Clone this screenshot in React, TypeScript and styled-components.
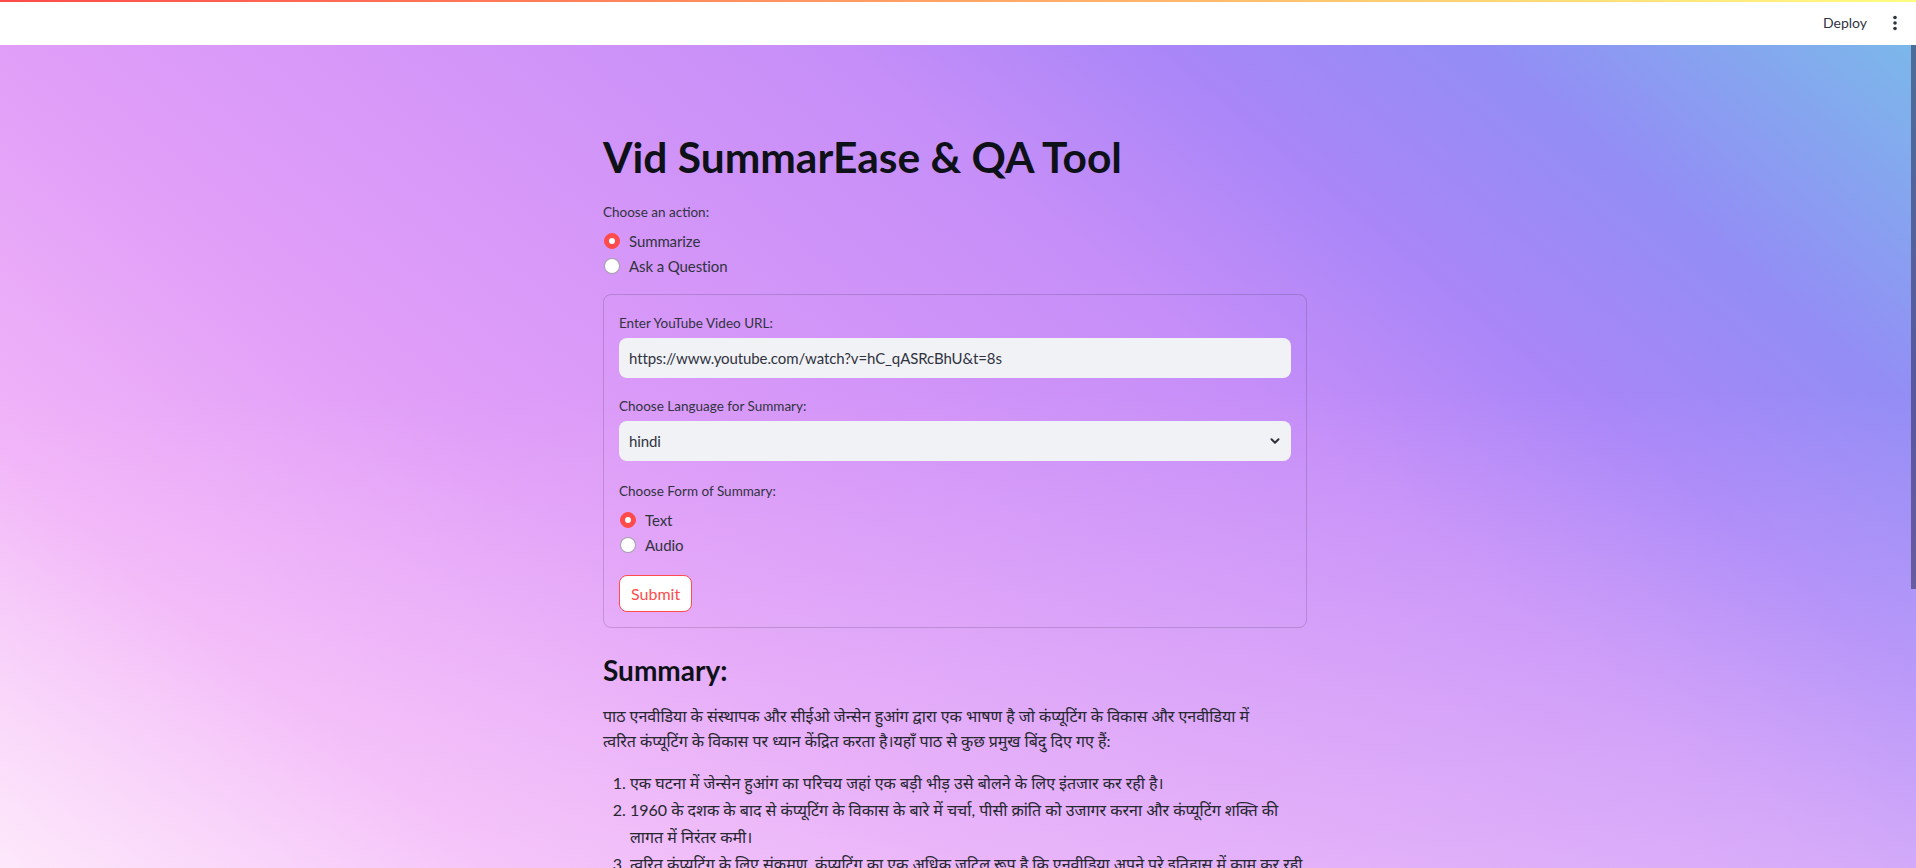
import React from 'react';
import styled, { createGlobalStyle } from 'styled-components';

const GlobalStyle = createGlobalStyle`
  html, body { margin: 0; padding: 0; height: 100%; overflow: hidden; }
  body {
    font-family: Lato, "Noto Sans", "Noto Sans Devanagari", sans-serif;
    color: #31333f;
  }
  * { box-sizing: border-box; }
`;

const Shell = styled.div`
  height: 100vh;
  display: flex;
  flex-direction: column;
  overflow: hidden;
`;

const Header = styled.header`
  position: relative;
  flex: none;
  height: 45px;
  background: #ffffff;
  display: flex;
  align-items: center;
  justify-content: flex-end;
  padding-right: 12px;
  gap: 7px;
  &::before {
    content: '';
    position: absolute;
    top: 0;
    left: 0;
    right: 0;
    height: 2px;
    background: linear-gradient(90deg, #ff4b4b, #fffd80);
  }
`;

const DeployButton = styled.button`
  border: none;
  background: transparent;
  font-family: Lato, "Noto Sans", sans-serif;
  font-size: 14px;
  color: #31333f;
  padding: 4px 12px;
  cursor: pointer;
`;

const MenuButton = styled.button`
  border: none;
  background: transparent;
  width: 18px;
  height: 28px;
  padding: 0;
  display: flex;
  align-items: center;
  justify-content: center;
`;

const Main = styled.main`
  position: relative;
  flex: 1;
  overflow: hidden;
  background:
    linear-gradient(to bottom, rgba(253, 232, 251, 0) 42%, rgba(253, 232, 251, 0.32) 100%),
    linear-gradient(
      40deg,
      #fde8fb 0%,
      #f1b4f8 17%,
      #e09ef8 34%,
      #d295f8 50%,
      #c58ef8 63%,
      #a986f8 74%,
      #938df5 85%,
      #7bb8ea 100%
    );
`;

const ScrollThumb = styled.div`
  position: absolute;
  top: 0;
  right: 0;
  width: 5px;
  height: 544px;
  background: rgba(20, 20, 50, 0.45);
`;

const Block = styled.div`
  width: 704px;
  margin-left: calc(50% - 355px);
  padding-top: 86px;
  display: flex;
  flex-direction: column;
`;

const Title = styled.h1`
  margin: 0;
  font-size: 42.5px;
  line-height: 52px;
  font-weight: 700;
  color: #0e1117;
`;

const Label = styled.div<{ $top?: number }>`
  font-size: 13.5px;
  line-height: 20px;
  color: #31333f;
  margin-top: ${(p) => p.$top ?? 0}px;
`;

const RadioGroup = styled.div`
  display: flex;
  flex-direction: column;
  margin-top: 6px;
`;

const RadioRow = styled.label`
  display: flex;
  align-items: center;
  height: 25px;
  gap: 9px;
  padding-left: 1px;
  font-size: 15px;
  letter-spacing: -0.1px;
  color: #31333f;
`;

const RadioDot = styled.span<{ $checked?: boolean }>`
  width: 16px;
  height: 16px;
  border-radius: 50%;
  flex: none;
  position: relative;
  background: ${(p) => (p.$checked ? '#ff4b4b' : '#ffffff')};
  border: 1px solid ${(p) => (p.$checked ? '#ff4b4b' : 'rgba(49,51,63,0.45)')};
  &::after {
    content: '';
    display: ${(p) => (p.$checked ? 'block' : 'none')};
    position: absolute;
    left: 50%;
    top: 50%;
    width: 6px;
    height: 6px;
    margin: -3px 0 0 -3px;
    border-radius: 50%;
    background: #ffffff;
  }
`;

const Form = styled.div`
  margin-top: 16px;
  border: 1px solid rgba(49, 51, 63, 0.2);
  border-radius: 8px;
  padding: 18px 15px 15px;
  display: flex;
  flex-direction: column;
`;

const Field = styled.div`
  margin-top: 5px;
  height: 40px;
  border-radius: 8px;
  background: #f0f2f6;
  display: flex;
  align-items: center;
  padding: 0 10px;
  font-size: 15px;
  letter-spacing: -0.1px;
  color: #31333f;
  justify-content: space-between;
`;

const SubmitButton = styled.button`
  margin-top: 18px;
  align-self: flex-start;
  height: 37px;
  padding: 0 11px;
  border: 1px solid #ff4b4b;
  border-radius: 8px;
  background: #ffffff;
  color: #ff4b4b;
  font-family: Lato, "Noto Sans", sans-serif;
  font-size: 16px;
`;

const SubHeading = styled.h3`
  margin: 25px 0 0;
  font-size: 28px;
  line-height: 34px;
  font-weight: 700;
  color: #0e1117;
`;

const Paragraph = styled.p`
  margin: 17px 0 0;
  padding-right: 40px;
  font-size: 16px;
  line-height: 24.5px;
  color: #262730;
`;

const List = styled.ol`
  margin: 16px 0 0;
  padding-left: 27px;
  font-size: 16px;
  line-height: 27px;
  color: #262730;
  li { margin: 0; padding-left: 0; }
`;

const Dots = () => (
  <svg width="4" height="16" viewBox="0 0 4 16">
    <circle cx="2" cy="2.5" r="1.8" fill="#31333f" />
    <circle cx="2" cy="8" r="1.8" fill="#31333f" />
    <circle cx="2" cy="13.5" r="1.8" fill="#31333f" />
  </svg>
);

const Chevron = () => (
  <svg width="12" height="12" viewBox="0 0 12 12">
    <path d="M2.5 4.2 L6 7.7 L9.5 4.2" fill="none" stroke="#31333f" strokeWidth="2" strokeLinecap="round" strokeLinejoin="round" />
  </svg>
);

export default function App() {
  return (
    <>
      <GlobalStyle />
      <Shell>
        <Header>
          <DeployButton>Deploy</DeployButton>
          <MenuButton aria-label="menu">
            <Dots />
          </MenuButton>
        </Header>
        <Main>
          <ScrollThumb />
          <Block>
            <Title>Vid SummarEase &amp; QA Tool</Title>
            <Label $top={19}>Choose an action:</Label>
            <RadioGroup>
              <RadioRow>
                <RadioDot $checked />
                Summarize
              </RadioRow>
              <RadioRow>
                <RadioDot />
                Ask a Question
              </RadioRow>
            </RadioGroup>
            <Form>
              <Label>Enter YouTube Video URL:</Label>
              <Field>https://www.youtube.com/watch?v=hC_qASRcBhU&amp;t=8s</Field>
              <Label $top={18}>Choose Language for Summary:</Label>
              <Field>
                hindi
                <Chevron />
              </Field>
              <Label $top={20}>Choose Form of Summary:</Label>
              <RadioGroup>
                <RadioRow>
                  <RadioDot $checked />
                  Text
                </RadioRow>
                <RadioRow>
                  <RadioDot />
                  Audio
                </RadioRow>
              </RadioGroup>
              <SubmitButton>Submit</SubmitButton>
            </Form>
            <SubHeading>Summary:</SubHeading>
            <Paragraph>
              पाठ एनवीडिया के संस्थापक और सीईओ जेन्सेन हुआंग द्वारा एक भाषण है जो कंप्यूटिंग के विकास और एनवीडिया में त्वरित कंप्यूटिंग के विकास पर ध्यान केंद्रित करता है।यहाँ पाठ से कुछ प्रमुख बिंदु दिए गए हैं:
            </Paragraph>
            <List>
              <li>एक घटना में जेन्सेन हुआंग का परिचय जहां एक बड़ी भीड़ उसे बोलने के लिए इंतजार कर रही है।</li>
              <li>1960 के दशक के बाद से कंप्यूटिंग के विकास के बारे में चर्चा, पीसी क्रांति को उजागर करना और कंप्यूटिंग शक्ति की लागत में निरंतर कमी।</li>
              <li>त्वरित कंप्यूटिंग के लिए संक्रमण, कंप्यूटिंग का एक अधिक जटिल रूप है कि एनवीडिया अपने पूरे इतिहास में काम कर रही है।</li>
            </List>
          </Block>
        </Main>
      </Shell>
    </>
  );
}
